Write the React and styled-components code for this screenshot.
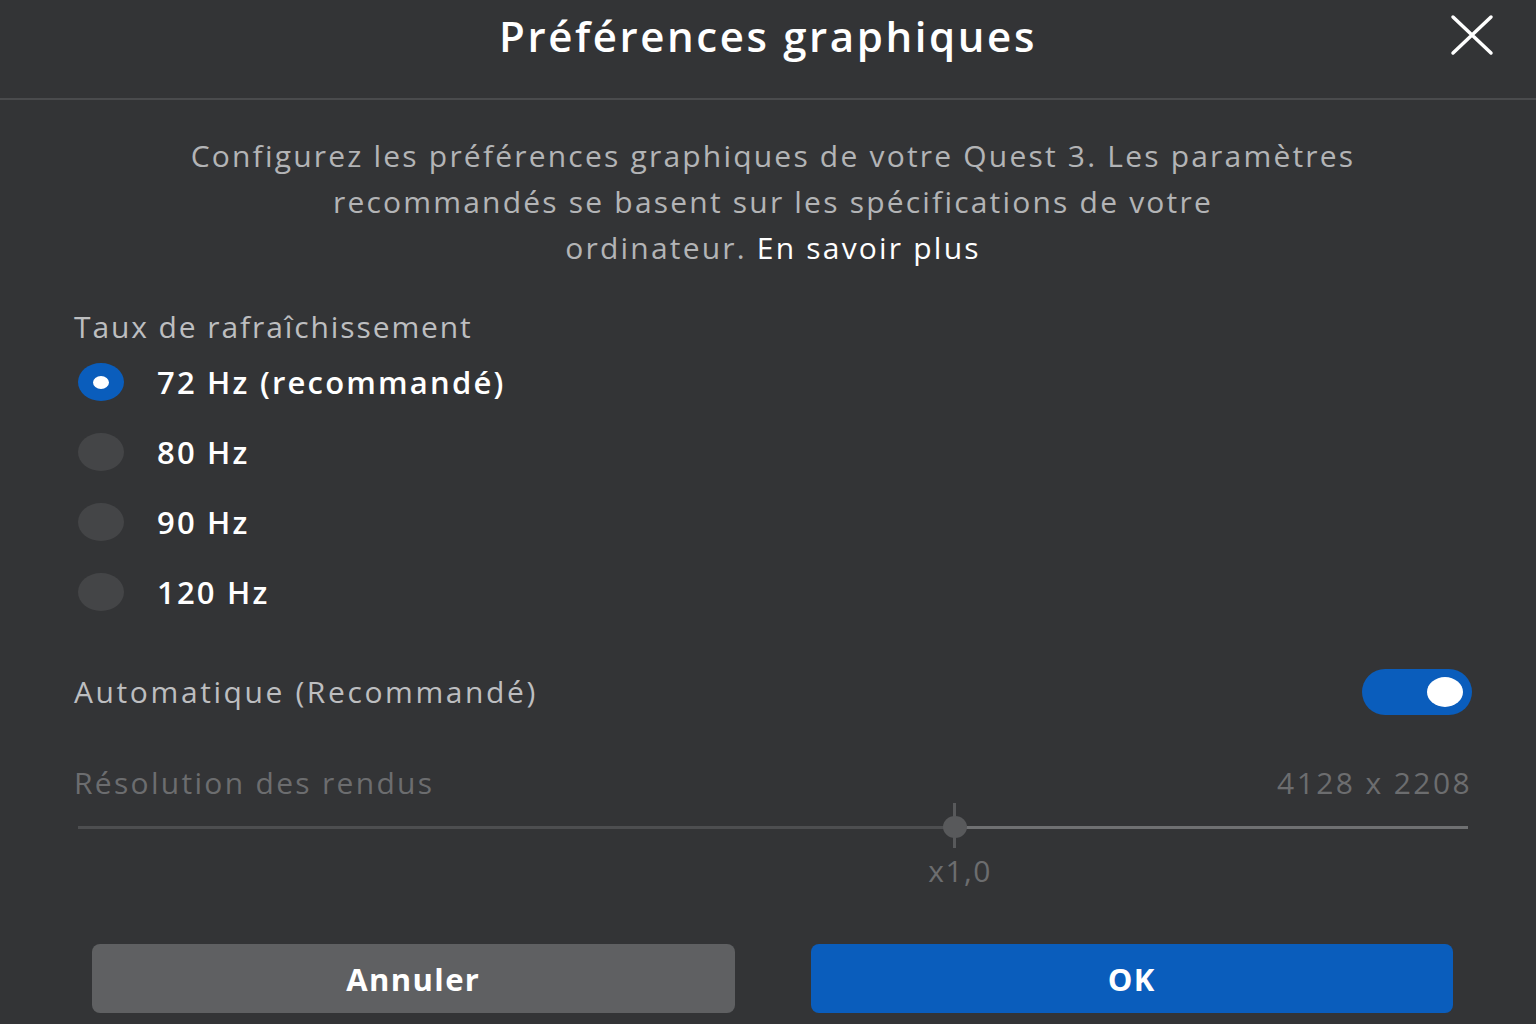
import React, { useState } from "react"
import styled, { createGlobalStyle } from "styled-components"

const GlobalStyle = createGlobalStyle`
  html, body {
    margin: 0;
    padding: 0;
    background: #333436;
  }
  body {
    font-family: "Open Sans", "Noto Sans", sans-serif;
  }
`

const BLUE = "#0a5dbc"

const Dialog = styled.div`
  width: 1536px;
  height: 1024px;
  background: #333436;
  display: flex;
  flex-direction: column;
  overflow: hidden;
`

const Header = styled.header`
  position: relative;
  height: 98px;
  border-bottom: 2px solid #4a4b4d;
  display: flex;
  align-items: center;
  justify-content: center;
`

const Title = styled.h1`
  margin: 0 0 27px;
  color: #ffffff;
  font-size: 42px;
  font-weight: 600;
  letter-spacing: 2.6px;
`

const CloseButton = styled.button`
  position: absolute;
  right: 40px;
  top: 14px;
  width: 48px;
  height: 44px;
  padding: 0;
  border: none;
  background: transparent;
  cursor: pointer;
  svg {
    display: block;
  }
`

const Body = styled.main`
  display: flex;
  flex-direction: column;
  padding: 33px 64px 0 74px;
`

const Description = styled.p`
  margin: 0 0 36px;
  text-align: center;
  color: #b3b4b6;
  font-size: 30px;
  line-height: 46px;
  letter-spacing: 2.2px;
  a {
    color: #ffffff;
    text-decoration: none;
  }
`

const SectionLabel = styled.div`
  color: ${(p) => (p.$dim ? "#6c6d6f" : "#bdbec0")};
  font-size: 30px;
  line-height: 40px;
  letter-spacing: ${(p) => p.$spacing || "2.6px"};
`

const RadioGroup = styled.div`
  display: flex;
  flex-direction: column;
`

const RadioRow = styled.label`
  height: 70px;
  display: flex;
  align-items: center;
  gap: 33px;
  padding-left: 4px;
  cursor: pointer;
`

const RadioDot = styled.span`
  width: 46px;
  height: 38px;
  border-radius: 50%;
  background: ${(p) => (p.$checked ? BLUE : "#444547")};
  display: flex;
  align-items: center;
  justify-content: center;
  &::after {
    content: "";
    display: ${(p) => (p.$checked ? "block" : "none")};
    width: 16px;
    height: 13px;
    border-radius: 50%;
    background: #ffffff;
  }
`

const RadioText = styled.span`
  color: #ffffff;
  font-size: 31px;
  font-weight: 600;
  letter-spacing: 2.2px;
`

const ToggleRow = styled.div`
  margin-top: 42px;
  height: 46px;
  display: flex;
  align-items: center;
  justify-content: space-between;
`

const Toggle = styled.button`
  width: 110px;
  height: 46px;
  border: none;
  border-radius: 23px;
  background: ${(p) => (p.$on ? BLUE : "#555658")};
  display: flex;
  align-items: center;
  justify-content: ${(p) => (p.$on ? "flex-end" : "flex-start")};
  padding: 0 9px;
  cursor: pointer;
  &::after {
    content: "";
    width: 36px;
    height: 30px;
    border-radius: 50%;
    background: #ffffff;
  }
`

const ResolutionRow = styled.div`
  margin-top: 48px;
  display: flex;
  justify-content: space-between;
  align-items: center;
`

const Slider = styled.div`
  position: relative;
  height: 48px;
  margin: 0 4px;
  display: flex;
  align-items: center;
`

const Track = styled.div`
  height: 3px;
  background: ${(p) => p.$color};
  flex: ${(p) => p.$grow};
`

const Thumb = styled.div`
  position: absolute;
  top: 0;
  bottom: 0;
  width: 24px;
  transform: translateX(-50%);
  display: flex;
  align-items: center;
  justify-content: center;
  &::before {
    content: "";
    position: absolute;
    left: 10px;
    top: 0;
    bottom: 3px;
    width: 3px;
    background: #58595b;
  }
  &::after {
    content: "";
    position: relative;
    width: 24px;
    height: 22px;
    border-radius: 50%;
    background: #58595b;
  }
`

const Scale = styled.div`
  margin: 0 4px;
  height: 40px;
`

const Multiplier = styled.span`
  display: inline-block;
  transform: translateX(-50%);
  color: #6c6d6f;
  font-size: 30px;
  line-height: 40px;
  letter-spacing: 1.5px;
`

const Footer = styled.footer`
  display: flex;
  gap: 76px;
  padding: 0 83px 0 92px;
  margin-top: 53px;
`

const Button = styled.button`
  flex: 1;
  height: 69px;
  border: none;
  border-radius: 8px;
  background: ${(p) => (p.$primary ? BLUE : "#5f6062")};
  color: #ffffff;
  font-family: "Open Sans", "Noto Sans", sans-serif;
  font-size: 31px;
  font-weight: 700;
  letter-spacing: 1.4px;
  cursor: pointer;
`

const rates = ["72 Hz (recommandé)", "80 Hz", "90 Hz", "120 Hz"]

export default function App() {
  const [rate, setRate] = useState(0)
  const [auto, setAuto] = useState(true)
  const position = 0.631

  return (
    <Dialog>
      <GlobalStyle />
      <Header>
        <Title>Préférences graphiques</Title>
        <CloseButton aria-label="Fermer">
          <svg width="48" height="44" viewBox="0 0 48 44">
            <path
              d="M5 3 L43 39 M43 3 L5 39"
              stroke="#ffffff"
              strokeWidth="3.5"
              strokeLinecap="round"
            />
          </svg>
        </CloseButton>
      </Header>
      <Body>
        <Description>
          Configurez les préférences graphiques de votre Quest 3. Les paramètres
          <br />
          recommandés se basent sur les spécifications de votre
          <br />
          ordinateur. <a href="#">En savoir plus</a>
        </Description>

        <SectionLabel $spacing="1.9px">Taux de rafraîchissement</SectionLabel>
        <RadioGroup>
          {rates.map((r, i) => (
            <RadioRow key={r} onClick={() => setRate(i)}>
              <RadioDot $checked={rate === i} />
              <RadioText>{r}</RadioText>
            </RadioRow>
          ))}
        </RadioGroup>

        <ToggleRow>
          <SectionLabel>Automatique (Recommandé)</SectionLabel>
          <Toggle $on={auto} onClick={() => setAuto(!auto)} />
        </ToggleRow>

        <ResolutionRow>
          <SectionLabel $dim $spacing="2.3px">Résolution des rendus</SectionLabel>
          <SectionLabel $dim $spacing="2.4px">4128 x 2208</SectionLabel>
        </ResolutionRow>
        <Slider>
          <Track $color="#4d4e50" $grow={position} />
          <Track $color="#6f7072" $grow={1 - position} />
          <Thumb style={{ left: `${position * 100}%` }} />
        </Slider>
        <Scale style={{ paddingLeft: `${position * 100}%` }}>
          <Multiplier>x1,0</Multiplier>
        </Scale>
      </Body>
      <Footer>
        <Button>Annuler</Button>
        <Button $primary>OK</Button>
      </Footer>
    </Dialog>
  )
}
